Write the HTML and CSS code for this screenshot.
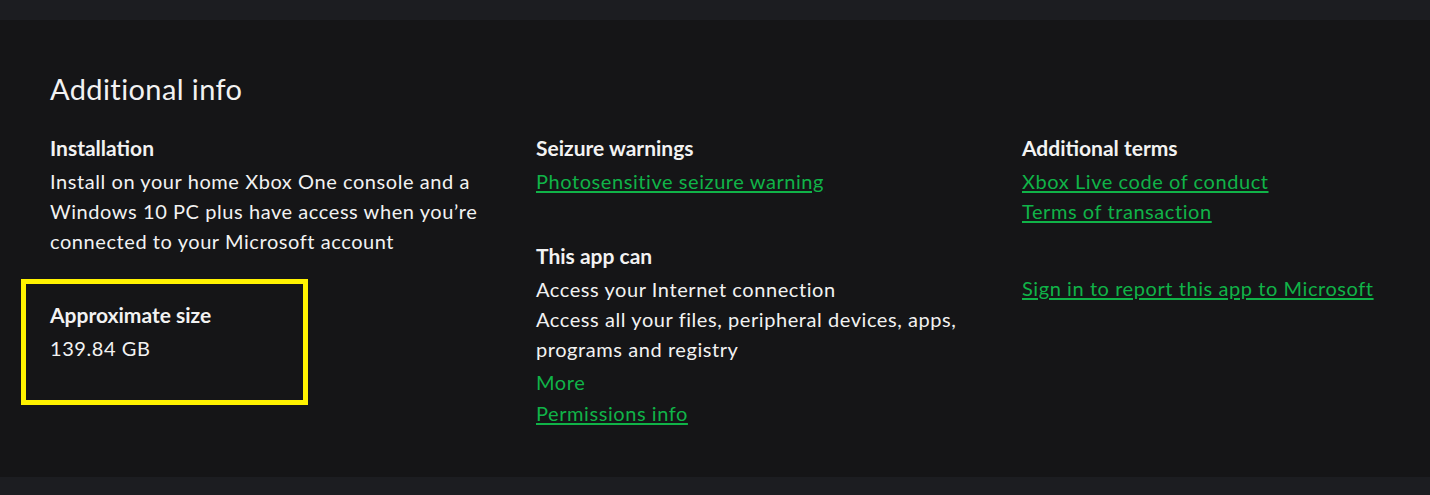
FILE: index.html
```html
<!DOCTYPE html>
<html lang="en">
<head>
<meta charset="utf-8">
<title>Additional info</title>
<link rel="stylesheet" href="styles.css">
</head>
<body>
<section class="info">
  <h2 class="info-title">Additional info</h2>
  <div class="info-grid">
    <div class="col">
      <div class="block">
        <h3 class="label">Installation</h3>
        <p class="text">Install on your home Xbox One console and a Windows 10 PC plus have access when you’re connected to your Microsoft account</p>
      </div>
      <div class="highlight">
        <h3 class="label">Approximate size</h3>
        <p class="text">139.84 GB</p>
      </div>
    </div>
    <div class="col">
      <div class="block">
        <h3 class="label">Seizure warnings</h3>
        <a class="link" href="#">Photosensitive seizure warning</a>
      </div>
      <div class="block block-gap">
        <h3 class="label">This app can</h3>
        <p class="text">Access your Internet connection</p>
        <p class="text">Access all your files, peripheral devices, apps, programs and registry</p>
        <a class="more" href="#">More</a>
        <a class="link" href="#">Permissions info</a>
      </div>
    </div>
    <div class="col">
      <div class="block">
        <h3 class="label">Additional terms</h3>
        <a class="link" href="#">Xbox Live code of conduct</a>
        <a class="link" href="#">Terms of transaction</a>
      </div>
      <div class="block block-gap2">
        <a class="link" href="#">Sign in to report this app to Microsoft</a>
      </div>
    </div>
  </div>
</section>
</body>
</html>
```

FILE: styles.css
```css
* { box-sizing: border-box; }
html, body { margin: 0; }
body {
  background: #1c1d21;
  padding: 20px 0 18px;
  font-family: "Lato", "Open Sans", sans-serif;
  color: #f2f2f2;
}
.info {
  background: #151517;
  height: 457px;
  padding: 51px 50px 0;
}
.info-title {
  margin: 0;
  font-size: 29px;
  line-height: 36px;
  font-weight: 400;
  letter-spacing: 0.4px;
}
.info-grid {
  display: grid;
  grid-template-columns: 486px 486px 1fr;
  margin-top: 26px;
}
.col { display: flex; flex-direction: column; align-items: flex-start; }
.block { display: flex; flex-direction: column; align-items: flex-start; }
.label {
  margin: 0 0 3px;
  font-size: 21px;
  line-height: 30px;
  font-weight: 700;
}
.text {
  margin: 0;
  font-size: 20px;
  line-height: 30px;
  letter-spacing: 0.57px;
  max-width: 436px;
}
.link, .more {
  color: #10b348;
  font-size: 20px;
  line-height: 30px;
  letter-spacing: 0.57px;
}
.link {
  text-decoration: underline;
  text-decoration-thickness: 2px;
  text-underline-offset: 2px;
}
.more { text-decoration: none; margin-top: 3px; line-height: 31px; }
.block-gap { margin-top: 45px; }
.block-gap2 { margin-top: 47px; }
.highlight {
  margin: 23px 0 0 -29px;
  width: 287px;
  height: 126px;
  border: 5px solid #fff200;
  padding: 16px 0 0 24px;
}
```
